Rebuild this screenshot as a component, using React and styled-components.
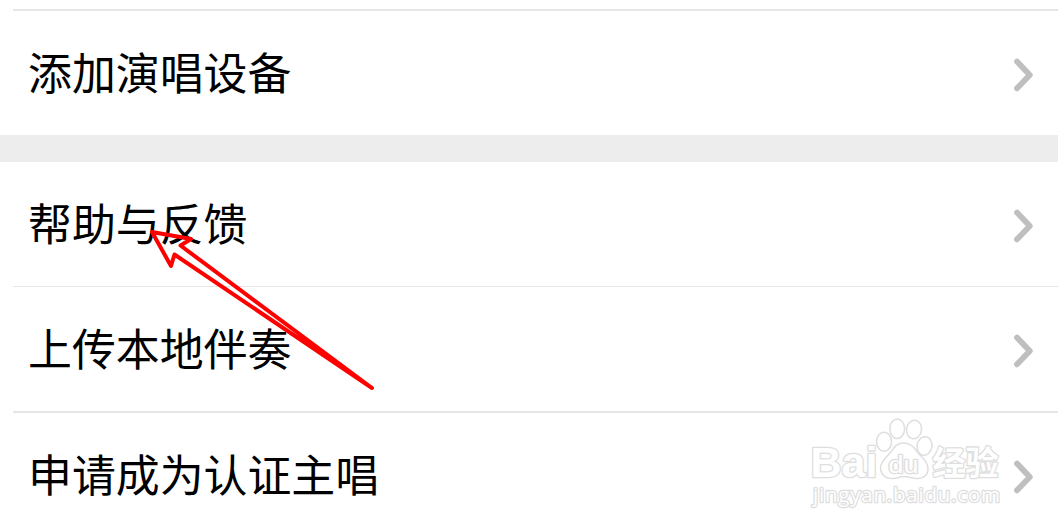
import React from "react";
import styled, { createGlobalStyle } from "styled-components";

const GlobalStyle = createGlobalStyle`
  body {
    margin: 0;
    background-color: #fff;
    overflow: hidden;
  }
`;

const Page = styled.main`
  position: relative;
  display: flex;
  flex-direction: column;
  width: 1058px;
  height: 532px;
  overflow: hidden;
  background-color: #fff;
  font-family: "Noto Sans CJK SC", "Noto Sans", sans-serif;
`;

const Group = styled.section`
  display: flex;
  flex-direction: column;
  flex-shrink: 0;
  padding-top: ${({ $top }) => $top || 0}px;
`;

const Divider = styled.hr`
  width: calc(100% - 13px);
  height: ${({ $size }) => $size}px;
  margin: 0 0 0 13px;
  border: 0;
  background-color: #e6e6e6;
`;

const Gap = styled.div`
  flex-shrink: 0;
  height: 27px;
  background-color: #ededed;
`;

const Row = styled.div`
  display: flex;
  align-items: center;
  justify-content: space-between;
  box-sizing: border-box;
  height: 124px;
  padding: 0 22px 4px 28px;
`;

const Label = styled.span`
  color: #000;
  font-size: 43.9px;
  line-height: 64px;
  white-space: nowrap;
`;

const Chevron = styled.svg`
  width: 24px;
  height: 38px;
  margin-top: 8px;
  fill: none;
  stroke: #bfbfbf;
  stroke-width: 5.8;
  stroke-linecap: round;
  stroke-linejoin: round;
`;

const Arrow = styled.svg`
  position: absolute;
  top: 220px;
  left: 140px;
  width: 250px;
  height: 180px;
  fill: none;
  stroke: #f00;
  stroke-width: 4;
  stroke-linejoin: round;
  stroke-linecap: round;
`;

const Watermark = styled.svg`
  position: absolute;
  top: 412px;
  left: 804px;
  width: 204px;
  height: 104px;
  fill: #fff;
  stroke: #dedede;
  stroke-width: 1.5;

  text {
    stroke-width: 2.6;
    stroke-linejoin: round;
    paint-order: stroke;
  }
`;

const MenuItem = ({ label }) => (
  <Row>
    <Label>{label}</Label>
    <Chevron viewBox="0 0 24 38">
      <path d="M5 5.5 L17.8 19 L5 32.3" />
    </Chevron>
  </Row>
);

const App = () => {
  return (
    <Page>
      <GlobalStyle />
      <Group $top={9}>
        <Divider $size={2} />
        <MenuItem label="添加演唱设备" />
      </Group>
      <Gap />
      <Group>
        <MenuItem label="帮助与反馈" />
        <Divider $size={1} />
        <MenuItem label="上传本地伴奏" />
        <Divider $size={2} />
        <MenuItem label="申请成为认证主唱" />
      </Group>

      <Watermark viewBox="804 412 204 104">
        <g fontFamily="Liberation Sans, sans-serif" fontWeight="700">
          <text x="810.5" y="477" fontSize="42.5" textLength="67" lengthAdjust="spacingAndGlyphs">
            Bai
          </text>
          <ellipse cx="884" cy="441.7" rx="7.5" ry="9.5" />
          <ellipse cx="897.2" cy="428.8" rx="7.4" ry="9.8" />
          <ellipse cx="914" cy="429.5" rx="7.5" ry="9.3" transform="rotate(8 914 429.5)" />
          <ellipse cx="924.5" cy="446" rx="7.4" ry="9.4" transform="rotate(10 924.5 446)" />
          <path d="M903.5 443 C912 443 915 449 919 454 C924 459 928 463 928 469 C928 476 922 479 916 478.5 C911 478 907 476.5 904 476.5 C900 476.5 897 478.5 892 478.5 C885 478.5 880.5 474 880.5 468 C880.5 461 886 458 890 453 C894 448 896 443 903.5 443 Z" />
          <text x="888.5" y="473" fontSize="23" fontWeight="400" textLength="30" lengthAdjust="spacingAndGlyphs">
            du
          </text>
          <text x="932.5" y="475" fontSize="33" fontFamily="Noto Sans CJK SC, sans-serif">
            经验
          </text>
        </g>
        <text x="813" y="501.5" fontSize="20.5" fontFamily="Open Sans, sans-serif" textLength="187" lengthAdjust="spacing">
          jingyan.baidu.com
        </text>
      </Watermark>

      <Arrow viewBox="140 220 250 180">
        <path d="M372 388 L180.5 245.5 L191 239 L152 232 L171 266 L174.5 254.5 Z" />
      </Arrow>
    </Page>
  );
};

export default App;
